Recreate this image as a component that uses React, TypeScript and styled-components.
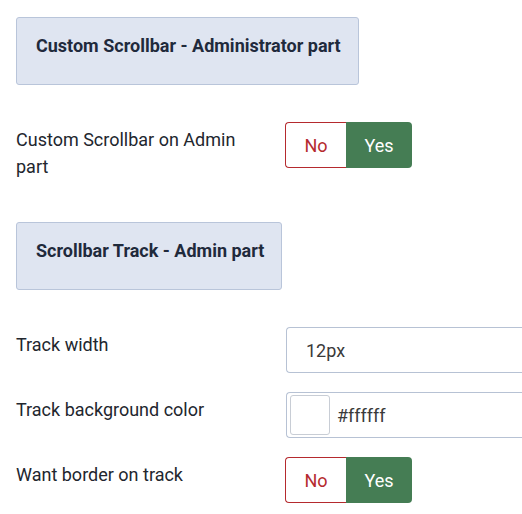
import React from "react";
import styled, { createGlobalStyle } from "styled-components";

const Global = createGlobalStyle`
  html, body { margin: 0; padding: 0; background: #fff; }
  body { font-family: Roboto, "Noto Sans", sans-serif; color: #22262e; overflow: hidden; }
`;

const Page = styled.div`
  width: 522px;
  height: 514px;
  padding: 17px 0 0 16px;
  box-sizing: border-box;
  display: flex;
  flex-direction: column;
  overflow: hidden;
`;

const Heading = styled.div<{ $gapAfter: number }>`
  align-self: flex-start;
  background: #dfe5f1;
  border: 1px solid #b9c5da;
  border-radius: 3px;
  padding: 16px 17px 26px 19px;
  font-size: 18px;
  font-weight: 700;
  line-height: 24px;
  color: #1f2a3c;
  margin-bottom: ${(p) => p.$gapAfter}px;
`;

const Row = styled.div<{ $gapAfter: number }>`
  display: grid;
  grid-template-columns: 269px 1fr;
  align-items: start;
  margin-bottom: ${(p) => p.$gapAfter}px;
`;

const Label = styled.div`
  font-size: 18px;
  line-height: 27px;
  padding-top: 4px;
  color: #22262e;
  max-width: 240px;
`;

const Toggle = styled.div`
  display: flex;
  width: 127px;
  height: 46px;
  box-sizing: border-box;
`;

const ToggleOption = styled.div<{ $active: boolean; $side: "left" | "right" }>`
  flex: ${(p) => (p.$side === "left" ? "0 0 61px" : "1")};
  display: flex;
  align-items: center;
  justify-content: center;
  font-size: 18px;
  box-sizing: border-box;
  ${(p) =>
    p.$side === "left"
      ? `border-radius: 4px 0 0 4px; border: 1px solid #b52a2e; border-right: none; color: #b52a2e; background: #fff;`
      : `border-radius: 0 4px 4px 0; background: #457d54; color: #fff;`}
`;

const Input = styled.div`
  height: 46px;
  width: 260px;
  box-sizing: border-box;
  border: 1px solid #b7c2d4;
  border-radius: 4px 0 0 4px;
  border-right: none;
  display: flex;
  align-items: center;
  padding-left: 19px;
  font-size: 18px;
  color: #3a3a3a;
  margin-left: 1px;
`;

const ColorInput = styled(Input)`
  padding-left: 3px;
  gap: 7px;
`;

const Swatch = styled.div`
  width: 40px;
  height: 40px;
  box-sizing: border-box;
  border: 1px solid #c8cdd5;
  border-radius: 3px;
  background: #ffffff;
`;

const YesNo = () => (
  <Toggle>
    <ToggleOption $side="left" $active={false}>No</ToggleOption>
    <ToggleOption $side="right" $active>Yes</ToggleOption>
  </Toggle>
);

export default function App() {
  return (
    <>
      <Global />
      <Page>
        <Heading $gapAfter={37}>Custom Scrollbar - Administrator part</Heading>
        <Row $gapAfter={42}>
          <Label>Custom Scrollbar on Admin part</Label>
          <YesNo />
        </Row>
        <Heading $gapAfter={37}>Scrollbar Track - Admin part</Heading>
        <Row $gapAfter={19}>
          <Label>Track width</Label>
          <Input>12px</Input>
        </Row>
        <Row $gapAfter={19}>
          <Label>Track background color</Label>
          <ColorInput>
            <Swatch />
            #ffffff
          </ColorInput>
        </Row>
        <Row $gapAfter={0}>
          <Label>Want border on track</Label>
          <YesNo />
        </Row>
      </Page>
    </>
  );
}
